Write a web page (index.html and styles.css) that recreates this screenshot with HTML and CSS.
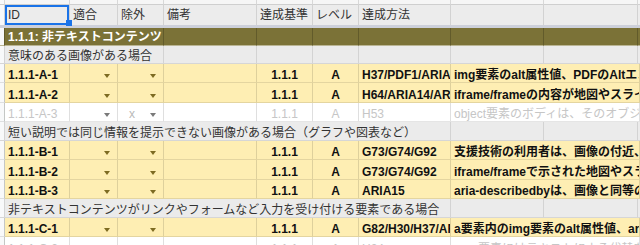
FILE: index.html
```html
<!DOCTYPE html>
<html lang="ja">

<head>
  <meta charset="UTF-8" />
  <meta name="viewport" content="width=device-width, initial-scale=1.0" />
  <title>達成方法チェックリスト</title>
  <link rel="stylesheet" href="styles.css">
</head>

<body>
  <div class="sheet">
    <!-- top edge of the row above the header -->
    <div class="row row-top">
      <div class="cell gutter"></div>
      <div class="cell"></div><div class="cell"></div><div class="cell"></div><div class="cell"></div>
      <div class="cell"></div><div class="cell"></div><div class="cell"></div><div class="cell"></div>
      <div class="cell"></div><div class="cell"></div>
    </div>

    <!-- header row -->
    <div class="row row-head">
      <div class="cell gutter"></div>
      <div class="cell selected">ID<span class="handle"></span></div>
      <div class="cell">適合</div>
      <div class="cell">除外</div>
      <div class="cell">備考</div>
      <div class="cell">達成基準</div>
      <div class="cell">レベル</div>
      <div class="cell">達成方法</div>
      <div class="cell"></div>
      <div class="cell"></div>
      <div class="cell"></div>
    </div>
    <div class="frozen-line"></div>

    <!-- guideline title -->
    <div class="row row-title">
      <div class="cell gutter"></div>
      <div class="cell span-a">1.1.1: 非テキストコンテンツ</div>
      <div class="cell"></div><div class="cell"></div><div class="cell"></div><div class="cell"></div>
      <div class="cell"></div><div class="cell"></div><div class="cell"></div>
    </div>

    <div class="row row-section row-first">
      <div class="cell gutter"></div>
      <div class="cell span-a">意味のある画像がある場合</div>
      <div class="cell"></div><div class="cell"></div><div class="cell"></div><div class="cell"></div>
      <div class="cell"></div><div class="cell"></div><div class="cell"></div>
    </div>

    <div class="row row-item">
      <div class="cell gutter"></div>
      <div class="cell">1.1.1-A-1</div>
      <div class="cell pick"><span class="arrow"></span></div>
      <div class="cell pick"><span class="arrow"></span></div>
      <div class="cell"></div>
      <div class="cell center">1.1.1</div>
      <div class="cell center">A</div>
      <div class="cell">H37/PDF1/ARIA6</div>
      <div class="cell span-rest">img要素のalt属性値、PDFのAltエントリ、aria-labelで代替テキストを提供する</div>
    </div>

    <div class="row row-item">
      <div class="cell gutter"></div>
      <div class="cell">1.1.1-A-2</div>
      <div class="cell pick"><span class="arrow"></span></div>
      <div class="cell pick"><span class="arrow"></span></div>
      <div class="cell"></div>
      <div class="cell center">1.1.1</div>
      <div class="cell center">A</div>
      <div class="cell">H64/ARIA14/ARIA16</div>
      <div class="cell span-rest">iframe/frameの内容が地図やスライドなどの画像の場合、title属性で説明する</div>
    </div>

    <div class="row row-off">
      <div class="cell gutter"></div>
      <div class="cell">1.1.1-A-3</div>
      <div class="cell pick"><span class="arrow"></span></div>
      <div class="cell pick"><span class="mark">x</span><span class="arrow"></span></div>
      <div class="cell"></div>
      <div class="cell center">1.1.1</div>
      <div class="cell center">A</div>
      <div class="cell">H53</div>
      <div class="cell span-rest">object要素のボディは、そのオブジェクトの代替コンテンツを提供する</div>
    </div>

    <div class="row row-section">
      <div class="cell gutter"></div>
      <div class="cell span-b">短い説明では同じ情報を提示できない画像がある場合（グラフや図表など）</div>
      <div class="cell"></div><div class="cell"></div><div class="cell"></div>
    </div>

    <div class="row row-item">
      <div class="cell gutter"></div>
      <div class="cell">1.1.1-B-1</div>
      <div class="cell pick"><span class="arrow"></span></div>
      <div class="cell pick"><span class="arrow"></span></div>
      <div class="cell"></div>
      <div class="cell center">1.1.1</div>
      <div class="cell center">A</div>
      <div class="cell">G73/G74/G92</div>
      <div class="cell span-rest">支援技術の利用者は、画像の付近、または別ページで詳細な説明を得られる</div>
    </div>

    <div class="row row-item">
      <div class="cell gutter"></div>
      <div class="cell">1.1.1-B-2</div>
      <div class="cell pick"><span class="arrow"></span></div>
      <div class="cell pick"><span class="arrow"></span></div>
      <div class="cell"></div>
      <div class="cell center">1.1.1</div>
      <div class="cell center">A</div>
      <div class="cell">G73/G74/G92</div>
      <div class="cell span-rest">iframe/frameで示された地図やスライドの詳細な説明を得られる</div>
    </div>

    <div class="row row-item">
      <div class="cell gutter"></div>
      <div class="cell">1.1.1-B-3</div>
      <div class="cell pick"><span class="arrow"></span></div>
      <div class="cell pick"><span class="arrow"></span></div>
      <div class="cell"></div>
      <div class="cell center">1.1.1</div>
      <div class="cell center">A</div>
      <div class="cell">ARIA15</div>
      <div class="cell span-rest">aria-describedbyは、画像と同等の説明を参照する</div>
    </div>

    <div class="row row-section">
      <div class="cell gutter"></div>
      <div class="cell span-b">非テキストコンテンツがリンクやフォームなど入力を受け付ける要素である場合</div>
      <div class="cell"></div><div class="cell"></div><div class="cell"></div>
    </div>

    <div class="row row-item">
      <div class="cell gutter"></div>
      <div class="cell">1.1.1-C-1</div>
      <div class="cell pick"><span class="arrow"></span></div>
      <div class="cell pick"><span class="arrow"></span></div>
      <div class="cell"></div>
      <div class="cell center">1.1.1</div>
      <div class="cell center">A</div>
      <div class="cell">G82/H30/H37/ARIA6</div>
      <div class="cell span-rest">a要素内のimg要素のalt属性値、area要素のalt属性値でリンク先を示す</div>
    </div>

    <div class="row row-off">
      <div class="cell gutter"></div>
      <div class="cell">1.1.1-C-2</div>
      <div class="cell pick"><span class="arrow"></span></div>
      <div class="cell pick"><span class="arrow"></span></div>
      <div class="cell"></div>
      <div class="cell center">1.1.1</div>
      <div class="cell center">A</div>
      <div class="cell">H24</div>
      <div class="cell span-rest">area要素にはテキストによる代替を提供する</div>
    </div>
  </div>
</body>

</html>
```

FILE: styles.css
```css
/* Basic page styling */
body {
  margin: 0;
  overflow: hidden;
  font-family: "Liberation Sans", "Noto Sans CJK JP", sans-serif;
  font-size: 12px;
  color: #222;
  background-color: #fff;
}

/* Spreadsheet grid */
.row {
  display: grid;
  grid-template-columns: 5px 65px 48px 46px 93px 56px 46px 92px 93px 94px 1fr;
  height: 19.25px;
}

.cell {
  box-sizing: border-box;
  display: flex;
  align-items: flex-end;
  padding: 0 3px;
  line-height: 14px;
  white-space: nowrap;
  overflow: hidden;
  border-right: 1px solid rgba(0, 0, 0, 0.12);
  border-bottom: 1px solid rgba(0, 0, 0, 0.1);
}

.gutter {
  padding: 0;
  background-color: #f8f9fa;
  border-right-color: #c4c7c5;
}

.center {
  justify-content: center;
}

.span-a {
  grid-column: 2 / 5;
}

.span-b {
  grid-column: 2 / 9;
}

.span-rest {
  grid-column: 9 / 12;
}

/* Top edge row */
.row-top {
  height: 5px;
  background-color: #f6f6f6;
}

.row-top .cell {
  border-bottom-color: #cfcfcf;
  border-right-color: #d8d8d8;
}

/* Header row */
.row-head {
  height: 20px;
  background-color: #ececec;
}

.row-head .cell {
  align-items: center;
  color: #333;
  border-bottom: none;
  border-right-color: #d2d2d2;
}

.selected {
  position: relative;
  overflow: visible;
  box-shadow: inset 0 0 0 2px #1a73e8;
}

.handle {
  position: absolute;
  right: -3px;
  bottom: -1px;
  width: 6px;
  height: 6px;
  background-color: #1a73e8;
  z-index: 1;
}

.frozen-line {
  height: 3px;
  background-color: #cdd0da;
}

/* Guideline title */
.row-title {
  height: 18px;
  background-color: #7b7237;
}

.row-title .cell {
  padding-bottom: 1px;
  color: #fff;
  font-weight: bold;
  overflow: visible;
  border-right-color: #625b2b;
  border-bottom-color: #bab594;
}

.row-title .gutter {
  background-color: #f8f9fa;
}

/* Section headings */
.row-section {
  background-color: #ebebeb;
}

.row-first {
  height: 18px;
}

.row-section .cell {
  color: #333;
  border-right-color: #d3d3d3;
  border-bottom-color: #d6d6d6;
}

/* Item rows */
.row-item {
  background-color: #feeeb3;
  font-weight: bold;
  color: #111;
}

.row-item .gutter,
.row-off .gutter {
  background-color: #f8f9fa;
}

.row-off {
  background-color: #fff;
  color: #c6c6c6;
}

/* Dropdown cells */
.pick {
  justify-content: flex-end;
  padding-right: 7px;
}

.arrow {
  width: 0;
  height: 0;
  margin-bottom: 4px;
  border-left: 3px solid transparent;
  border-right: 3px solid transparent;
  border-top: 4px solid #7d6b22;
}

.row-off .arrow {
  border-top-color: #7a7a7a;
}

.mark {
  margin-right: auto;
  padding-left: 8px;
  color: #b8b8b8;
  font-weight: normal;
}
```
